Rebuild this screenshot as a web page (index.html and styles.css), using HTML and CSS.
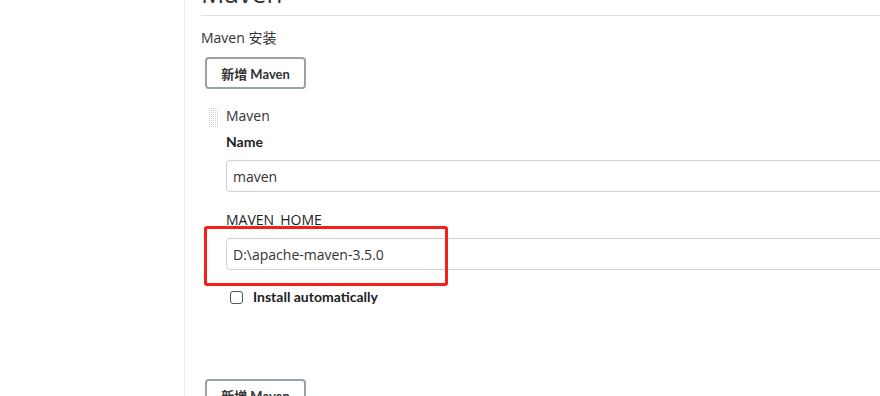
FILE: index.html
```html
<!DOCTYPE html>
<html>
<head>
<meta charset="utf-8">
<link rel="stylesheet" href="styles.css">
</head>
<body>
<div class="page">
  <aside class="side"></aside>
  <main class="main">
    <h2 class="section-title">Maven</h2>
    <div class="group-label">Maven 安装</div>
    <button class="btn">新增 Maven</button>
    <div class="repeat">
      <div class="handle"></div>
      <div class="repeat-body">
        <div class="repeat-title">Maven</div>
        <label class="field-label">Name</label>
        <input class="text-input" type="text" value="maven">
        <label class="field-label home">MAVEN_HOME</label>
        <div class="highlight-wrap">
          <input class="text-input" type="text" value="D:\apache-maven-3.5.0">
          <div class="highlight"></div>
        </div>
        <label class="check">
          <span class="box"></span>
          <span>Install automatically</span>
        </label>
      </div>
    </div>
    <button class="btn btn-bottom">新增 Maven</button>
  </main>
</div>
</body>
</html>
```

FILE: styles.css
```css
html, body {
  margin: 0;
  padding: 0;
  background: #fff;
  overflow: hidden;
}
body {
  font-family: "Open Sans", "Noto Sans CJK SC", sans-serif;
  color: #333;
  font-size: 14px;
}
.page {
  display: flex;
  height: 396px;
  overflow: hidden;
}
.side {
  width: 184px;
  flex: none;
  border-right: 1px solid #e9ecef;
}
.main {
  flex: 1;
  min-width: 0;
  padding-left: 15px;
  margin-top: -20px;
}
.section-title {
  font-size: 26px;
  font-weight: 400;
  line-height: 26px;
  margin: 0 0 0 1px;
  padding-bottom: 9px;
  border-bottom: 1px solid #e0e0e0;
  color: #333;
}
.group-label {
  margin-top: 12px;
  margin-left: 1px;
  line-height: 20px;
  font-size: 14px;
  color: #333;
}
.btn {
  display: block;
  margin: 9px 0 0 5px;
  width: 101px;
  height: 32px;
  border: 2px solid #98a2ab;
  border-radius: 4px;
  background: #fff;
  font-family: "Lato", "Noto Sans CJK SC", sans-serif;
  font-size: 13px;
  font-weight: 700;
  color: #333;
  padding: 0;
}
.repeat {
  display: flex;
  margin-top: 17px;
}
.handle {
  width: 11px;
  height: 20px;
  margin-left: 8px;
  margin-top: 1px;
  flex: none;
  background-color: #cfcfcf;
  background-image: linear-gradient(90deg, #fff 1px, transparent 1px), linear-gradient(#fff 1px, transparent 1px);
  background-size: 2px 2px;
}
.repeat-body {
  flex: 1;
  margin-left: 7px;
  min-width: 0;
}
.repeat-title {
  line-height: 20px;
}
.field-label {
  display: block;
  font-family: "Lato", "Noto Sans CJK SC", sans-serif;
  font-size: 14px;
  font-weight: 700;
  line-height: 20px;
  margin-top: 6px;
  color: #222;
}
.text-input {
  display: block;
  box-sizing: border-box;
  width: 700px;
  height: 32px;
  margin-top: 8px;
  border: 1px solid #ced4da;
  border-radius: 4px;
  padding: 0 6px;
  font-family: inherit;
  font-size: 14px;
  color: #333;
  background: #fff;
}
.field-label.home {
  margin-top: 18px;
  font-family: "Open Sans", sans-serif;
  font-weight: 400;
}
.highlight-wrap {
  position: relative;
}
.highlight-wrap .text-input {
  margin-top: 8px;
}
.highlight {
  position: absolute;
  left: -22px;
  top: -12px;
  width: 244px;
  height: 60px;
  border: 3px solid #f5201a;
  border-radius: 3px;
  box-sizing: border-box;
}
.check {
  display: flex;
  align-items: center;
  margin-top: 18px;
  margin-left: 4px;
  font-family: "Lato", sans-serif;
  font-weight: 700;
  line-height: 18px;
  color: #222;
}
.box {
  width: 11px;
  height: 11px;
  border: 1px solid #555;
  border-radius: 3px;
  margin-right: 10px;
}
.btn-bottom {
  margin-top: 73px;
}
```
